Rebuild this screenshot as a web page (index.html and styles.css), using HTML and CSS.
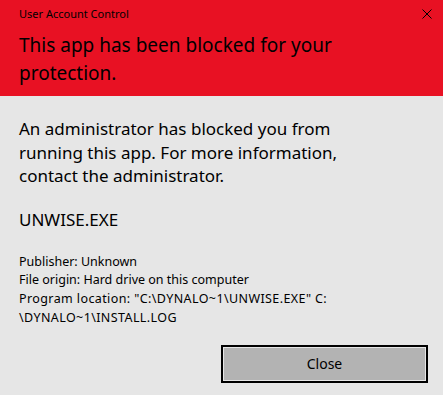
FILE: index.html
```html
<!DOCTYPE html>
<html lang="en">
<head>
  <meta charset="UTF-8">
  <meta name="viewport" content="width=device-width, initial-scale=1.0">
  <title>User Account Control</title>
  <link rel="stylesheet" href="styles.css">
</head>
<body>
  <div class="dialog">
    <header class="banner">
      <div class="titlebar">
        <span class="title">User Account Control</span>
        <button class="close" aria-label="Close">
          <svg width="10" height="10" viewBox="0 0 10 10">
            <path d="M0.5 0.5 L9.5 9.5 M9.5 0.5 L0.5 9.5" stroke="#000" stroke-width="1" fill="none"/>
          </svg>
        </button>
      </div>
      <h1 class="headline">This app has been blocked for your protection.</h1>
    </header>

    <div class="content">
      <p class="message">An administrator has blocked you from running this app. For more information, contact the administrator.</p>
      <p class="app-name">UNWISE.EXE</p>
      <div class="details">
        <div>Publisher: Unknown</div>
        <div>File origin: Hard drive on this computer</div>
        <div class="path">Program location: "C:\DYNALO~1\UNWISE.EXE" C:<br>\DYNALO~1\INSTALL.LOG</div>
      </div>
      <div class="actions">
        <button class="btn">Close</button>
      </div>
    </div>
  </div>
</body>
</html>
```

FILE: styles.css
```css
body {
  margin: 0;
  font-family: "Noto Sans", "Open Sans", sans-serif;
  background-color: #e6e6e6;
  color: #000;
}
.dialog {
  width: 443px;
  height: 395px;
  display: flex;
  flex-direction: column;
}
.banner {
  background: #e81123;
  height: 96px;
  padding: 0 0 0 19px;
  box-sizing: border-box;
}
.titlebar {
  display: flex;
  justify-content: space-between;
  align-items: flex-start;
  height: 31px;
}
.title {
  font-size: 11px;
  line-height: 16px;
  padding-top: 6px;
}
.close {
  background: none;
  border: none;
  padding: 0;
  margin: 9px 11px 0 0;
  width: 10px;
  height: 10px;
  display: flex;
  cursor: pointer;
}
.headline {
  margin: 0;
  font-size: 19px;
  font-weight: normal;
  line-height: 28px;
  max-width: 340px;
}
.content {
  padding: 21px 19px 0 19px;
  flex: 1;
  display: flex;
  flex-direction: column;
}
.message {
  margin: 0;
  font-size: 17px;
  line-height: 23.5px;
  max-width: 340px;
}
.app-name {
  margin: 20px 0 0;
  font-size: 17px;
  line-height: 24px;
}
.details {
  margin-top: 21px;
  font-size: 12.5px;
  line-height: 18.7px;
}
.path {
  letter-spacing: 0.4px;
}
.actions {
  display: flex;
  justify-content: flex-end;
  margin-top: 17.5px;
  margin-right: -4px;
}
.btn {
  width: 207px;
  height: 38px;
  font-family: inherit;
  font-size: 14px;
  background: #b3b3b3;
  border: 2px solid #000;
  box-shadow: inset 0 0 0 1px #e6e6e6;
  padding: 0;
  cursor: pointer;
}
```
